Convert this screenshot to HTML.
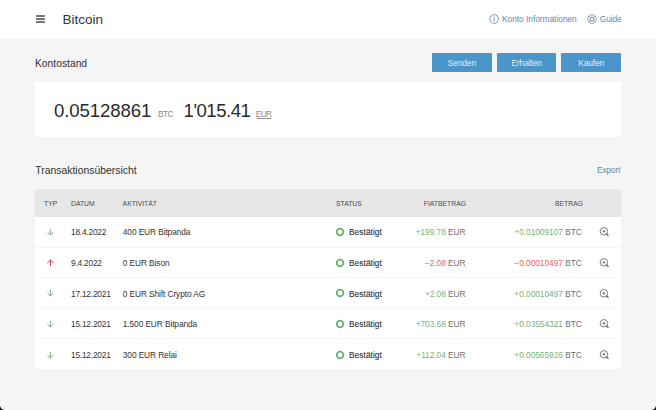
<!DOCTYPE html>
<html><head><meta charset="utf-8">
<style>
*{margin:0;padding:0;box-sizing:border-box}
html,body{width:656px;height:410px;overflow:hidden;background:#161a26}
.rim{position:absolute;left:0;top:0;width:656px;height:410px;background:#fff;border-radius:0 0 5px 5px}
body{font-family:"Liberation Sans",sans-serif;position:relative}
.app{position:absolute;left:0;top:0;width:656px;height:410px;background:#f5f5f5;border-radius:0 0 7px 7px;overflow:hidden}
.hdr{position:absolute;left:0;top:0;width:656px;height:38.9px;background:#fff}
.t{position:absolute;white-space:pre}
.burger{position:absolute;left:35.8px;width:9.2px;height:1.7px;background:#747474;border-radius:0.8px}
.btn{position:absolute;top:53px;height:19px;width:59.7px;background:#4a96ca;color:#e0eef8;font-size:8.4px;text-align:center;line-height:20px;border-radius:1px;letter-spacing:-0.1px}
.card{position:absolute;left:35px;top:82px;width:586px;height:55px;background:#fff}
.tbl{position:absolute;left:35px;top:189px;width:586px;height:180px;background:#fff}
.th{position:absolute;left:0;top:0;width:586px;height:28px;background:#e7e7e7}
.row{position:absolute;left:0;width:586px;height:31px;}
.sep{border-bottom:1px solid #f3f3f3}
.hc{position:absolute;font-size:6.8px;color:#4a4a4a;top:10.5px;line-height:7px;white-space:pre}
.c{position:absolute;font-size:8.35px;color:#333;line-height:8px;white-space:pre}
.g{color:#76b476}.r{color:#e0665a}.u{color:#707070}
.st{-webkit-text-stroke:0.1px currentColor}
.ring{position:absolute;left:300.8px;top:11px;width:8.6px;height:8.6px;border:2px solid #62b862;border-radius:50%}
</style></head><body>
<div class="rim"></div>
<div class="app">
  <div class="hdr">
    <div class="burger" style="top:15.45px"></div>
    <div class="burger" style="top:18.15px"></div>
    <div class="burger" style="top:20.95px"></div>
    <div class="t" style="left:62.5px;top:12.8px;font-size:13.5px;line-height:13.5px;color:#333">Bitcoin</div>
    <svg style="position:absolute;left:489px;top:14px" width="10" height="10" viewBox="0 0 10 10"><circle cx="5.2" cy="5" r="4.3" fill="none" stroke="#7f93a6" stroke-width="1"/><rect x="4.65" y="4.5" width="1.1" height="2.7" fill="#6f8396"/><circle cx="5.2" cy="3.3" r="0.62" fill="#6f8396"/></svg>
    <div class="t" style="left:502px;top:15.2px;font-size:8.3px;line-height:8.3px;color:#6589a8">Konto Informationen</div>
    <svg style="position:absolute;left:587px;top:14px" width="10" height="10" viewBox="0 0 10 10"><circle cx="5" cy="5" r="4.25" fill="none" stroke="#8398aa" stroke-width="1"/><rect x="3.25" y="3.25" width="3.5" height="3.5" rx="0.3" fill="none" stroke="#6f8598" stroke-width="0.95"/><path d="M3.5 3.5L2.1 2.1M6.5 3.5L7.9 2.1M3.5 6.5L2.1 7.9M6.5 6.5L7.9 7.9" stroke="#8398aa" stroke-width="0.7"/></svg>
    <div class="t" style="left:599.8px;top:14.7px;font-size:8.4px;line-height:8.4px;color:#6589a8;letter-spacing:-0.1px">Guide</div>
  </div>
  <div class="t" style="left:35px;top:58.5px;font-size:10.3px;line-height:10.3px;color:#333">Kontostand</div>
  <div class="btn" style="left:432px">Senden</div>
  <div class="btn" style="left:496.8px">Erhalten</div>
  <div class="btn" style="left:561.3px">Kaufen</div>
  <div class="card">
    <div class="t" style="left:18.9px;top:19.9px;font-size:18.6px;line-height:18.6px;color:#2a2a2a;letter-spacing:-0.08px">0.05128861</div>
    <div class="t" style="left:122.9px;top:27.8px;font-size:8.3px;line-height:8.3px;color:#8a8a8a;letter-spacing:-0.45px">BTC</div>
    <div class="t" style="left:148.6px;top:19.9px;font-size:18.6px;line-height:18.6px;color:#2a2a2a;letter-spacing:-0.5px">1'015.41</div>
    <div class="t" style="left:220.8px;top:27.8px;font-size:8.3px;line-height:8.3px;color:#8a8a8a;letter-spacing:-0.6px">EUR</div>
    <div style="position:absolute;left:221.8px;top:36.1px;width:14.3px;height:0.7px;background:#8f8f8f"></div>
  </div>
  <div class="t" style="left:35.3px;top:165.7px;font-size:10.4px;line-height:10.4px;color:#333">Transaktionsübersicht</div>
  <div class="t" style="left:597px;top:166.1px;font-size:8.3px;line-height:8.3px;color:#6589a8;letter-spacing:-0.1px">Export</div>
  <div class="tbl">
    <div class="th">
      <div class="hc" style="left:9px">TYP</div>
      <div class="hc" style="left:36px">DATUM</div>
      <div class="hc" style="left:87.6px">AKTIVITÄT</div>
      <div class="hc" style="left:301px">STATUS</div>
      <div class="hc" style="left:388.8px">FIATBETRAG</div>
      <div class="hc" style="left:520px">BETRAG</div>
    </div>
    <div class="row sep" style="top:28.0px">
      <svg style="position:absolute;left:11.5px;top:11.0px" width="8" height="8" viewBox="0 0 8 8"><path d="M3.3 0.8V6.9M0.4 4L3.3 6.9L6.2 4" fill="none" stroke="#6aa87a" stroke-width="0.9"/></svg>
      <div class="c" style="left:36px;top:11.2px;letter-spacing:-0.22px">18.4.2022</div>
      <div class="c" style="left:87.8px;top:11.2px;letter-spacing:-0.1px">400 EUR Bitpanda</div>
      <svg style="position:absolute;left:300px;top:10.0px" width="10" height="10" viewBox="0 0 10 10"><circle cx="5.1" cy="5" r="3.35" fill="none" stroke="#64b46e" stroke-width="1.75"/></svg>
      <div class="c st" style="left:314px;top:11.2px;letter-spacing:0.05px">Bestätigt</div>
      <div class="c" style="right:155.5px;top:11.2px;letter-spacing:-0.05px"><span class="g">+199.78</span> <span class="u">EUR</span></div>
      <div class="c" style="right:39.3px;top:11.2px;letter-spacing:-0.04px"><span class="g">+0.01009107</span> <span class="u">BTC</span></div>
      <svg style="position:absolute;left:563.6px;top:10.2px" width="11" height="11" viewBox="0 0 11 11"><circle cx="4.9" cy="4.3" r="3.75" fill="none" stroke="#737373" stroke-width="0.95"/><path d="M4.9 2.9V5.7M3.5 4.3H6.3" stroke="#6a6a6a" stroke-width="0.95" fill="none"/><path d="M7.4 6.8L9.1 8.5" stroke="#666" stroke-width="1.25" stroke-linecap="round"/></svg>
    </div>
    <div class="row sep" style="top:58.4px">
      <svg style="position:absolute;left:11.5px;top:11.3px" width="8" height="8" viewBox="0 0 8 8"><path d="M3.5 6.9V1.1M0.3 4L3.5 1L6.7 4" fill="none" stroke="#d8405a" stroke-width="1"/></svg>
      <div class="c" style="left:36px;top:11.5px;letter-spacing:-0.22px">9.4.2022</div>
      <div class="c" style="left:87.8px;top:11.5px;letter-spacing:-0.1px">0 EUR Bison</div>
      <svg style="position:absolute;left:300px;top:10.3px" width="10" height="10" viewBox="0 0 10 10"><circle cx="5.1" cy="5" r="3.35" fill="none" stroke="#64b46e" stroke-width="1.75"/></svg>
      <div class="c st" style="left:314px;top:11.5px;letter-spacing:0.05px">Bestätigt</div>
      <div class="c" style="right:155.5px;top:11.5px;letter-spacing:-0.05px"><span class="r">−2.08</span> <span class="u">EUR</span></div>
      <div class="c" style="right:39.3px;top:11.5px;letter-spacing:-0.04px"><span class="r">−0.00010497</span> <span class="u">BTC</span></div>
      <svg style="position:absolute;left:563.6px;top:10.5px" width="11" height="11" viewBox="0 0 11 11"><circle cx="4.9" cy="4.3" r="3.75" fill="none" stroke="#737373" stroke-width="0.95"/><path d="M4.9 2.9V5.7M3.5 4.3H6.3" stroke="#6a6a6a" stroke-width="0.95" fill="none"/><path d="M7.4 6.8L9.1 8.5" stroke="#666" stroke-width="1.25" stroke-linecap="round"/></svg>
    </div>
    <div class="row sep" style="top:88.8px">
      <svg style="position:absolute;left:11.5px;top:11.6px" width="8" height="8" viewBox="0 0 8 8"><path d="M3.3 0.8V6.9M0.4 4L3.3 6.9L6.2 4" fill="none" stroke="#6aa87a" stroke-width="0.9"/></svg>
      <div class="c" style="left:36px;top:11.8px;letter-spacing:-0.22px">17.12.2021</div>
      <div class="c" style="left:87.8px;top:11.8px;letter-spacing:-0.1px">0 EUR Shift Crypto AG</div>
      <svg style="position:absolute;left:300px;top:10.6px" width="10" height="10" viewBox="0 0 10 10"><circle cx="5.1" cy="5" r="3.35" fill="none" stroke="#64b46e" stroke-width="1.75"/></svg>
      <div class="c st" style="left:314px;top:11.8px;letter-spacing:0.05px">Bestätigt</div>
      <div class="c" style="right:155.5px;top:11.8px;letter-spacing:-0.05px"><span class="g">+2.08</span> <span class="u">EUR</span></div>
      <div class="c" style="right:39.3px;top:11.8px;letter-spacing:-0.04px"><span class="g">+0.00010497</span> <span class="u">BTC</span></div>
      <svg style="position:absolute;left:563.6px;top:10.8px" width="11" height="11" viewBox="0 0 11 11"><circle cx="4.9" cy="4.3" r="3.75" fill="none" stroke="#737373" stroke-width="0.95"/><path d="M4.9 2.9V5.7M3.5 4.3H6.3" stroke="#6a6a6a" stroke-width="0.95" fill="none"/><path d="M7.4 6.8L9.1 8.5" stroke="#666" stroke-width="1.25" stroke-linecap="round"/></svg>
    </div>
    <div class="row sep" style="top:119.2px">
      <svg style="position:absolute;left:11.5px;top:11.9px" width="8" height="8" viewBox="0 0 8 8"><path d="M3.3 0.8V6.9M0.4 4L3.3 6.9L6.2 4" fill="none" stroke="#6aa87a" stroke-width="0.9"/></svg>
      <div class="c" style="left:36px;top:12.1px;letter-spacing:-0.22px">15.12.2021</div>
      <div class="c" style="left:87.8px;top:12.1px;letter-spacing:-0.1px">1.500 EUR Bitpanda</div>
      <svg style="position:absolute;left:300px;top:10.9px" width="10" height="10" viewBox="0 0 10 10"><circle cx="5.1" cy="5" r="3.35" fill="none" stroke="#64b46e" stroke-width="1.75"/></svg>
      <div class="c st" style="left:314px;top:12.1px;letter-spacing:0.05px">Bestätigt</div>
      <div class="c" style="right:155.5px;top:12.1px;letter-spacing:-0.05px"><span class="g">+703.68</span> <span class="u">EUR</span></div>
      <div class="c" style="right:39.3px;top:12.1px;letter-spacing:-0.04px"><span class="g">+0.03554321</span> <span class="u">BTC</span></div>
      <svg style="position:absolute;left:563.6px;top:11.1px" width="11" height="11" viewBox="0 0 11 11"><circle cx="4.9" cy="4.3" r="3.75" fill="none" stroke="#737373" stroke-width="0.95"/><path d="M4.9 2.9V5.7M3.5 4.3H6.3" stroke="#6a6a6a" stroke-width="0.95" fill="none"/><path d="M7.4 6.8L9.1 8.5" stroke="#666" stroke-width="1.25" stroke-linecap="round"/></svg>
    </div>
    <div class="row" style="top:149.6px">
      <svg style="position:absolute;left:11.5px;top:12.2px" width="8" height="8" viewBox="0 0 8 8"><path d="M3.3 0.8V6.9M0.4 4L3.3 6.9L6.2 4" fill="none" stroke="#6aa87a" stroke-width="0.9"/></svg>
      <div class="c" style="left:36px;top:12.4px;letter-spacing:-0.22px">15.12.2021</div>
      <div class="c" style="left:87.8px;top:12.4px;letter-spacing:-0.1px">300 EUR Relai</div>
      <svg style="position:absolute;left:300px;top:11.2px" width="10" height="10" viewBox="0 0 10 10"><circle cx="5.1" cy="5" r="3.35" fill="none" stroke="#64b46e" stroke-width="1.75"/></svg>
      <div class="c st" style="left:314px;top:12.4px;letter-spacing:0.05px">Bestätigt</div>
      <div class="c" style="right:155.5px;top:12.4px;letter-spacing:-0.05px"><span class="g">+112.04</span> <span class="u">EUR</span></div>
      <div class="c" style="right:39.3px;top:12.4px;letter-spacing:-0.04px"><span class="g">+0.00565926</span> <span class="u">BTC</span></div>
      <svg style="position:absolute;left:563.6px;top:11.4px" width="11" height="11" viewBox="0 0 11 11"><circle cx="4.9" cy="4.3" r="3.75" fill="none" stroke="#737373" stroke-width="0.95"/><path d="M4.9 2.9V5.7M3.5 4.3H6.3" stroke="#6a6a6a" stroke-width="0.95" fill="none"/><path d="M7.4 6.8L9.1 8.5" stroke="#666" stroke-width="1.25" stroke-linecap="round"/></svg>
    </div>
  </div>
</div>
</body></html>
